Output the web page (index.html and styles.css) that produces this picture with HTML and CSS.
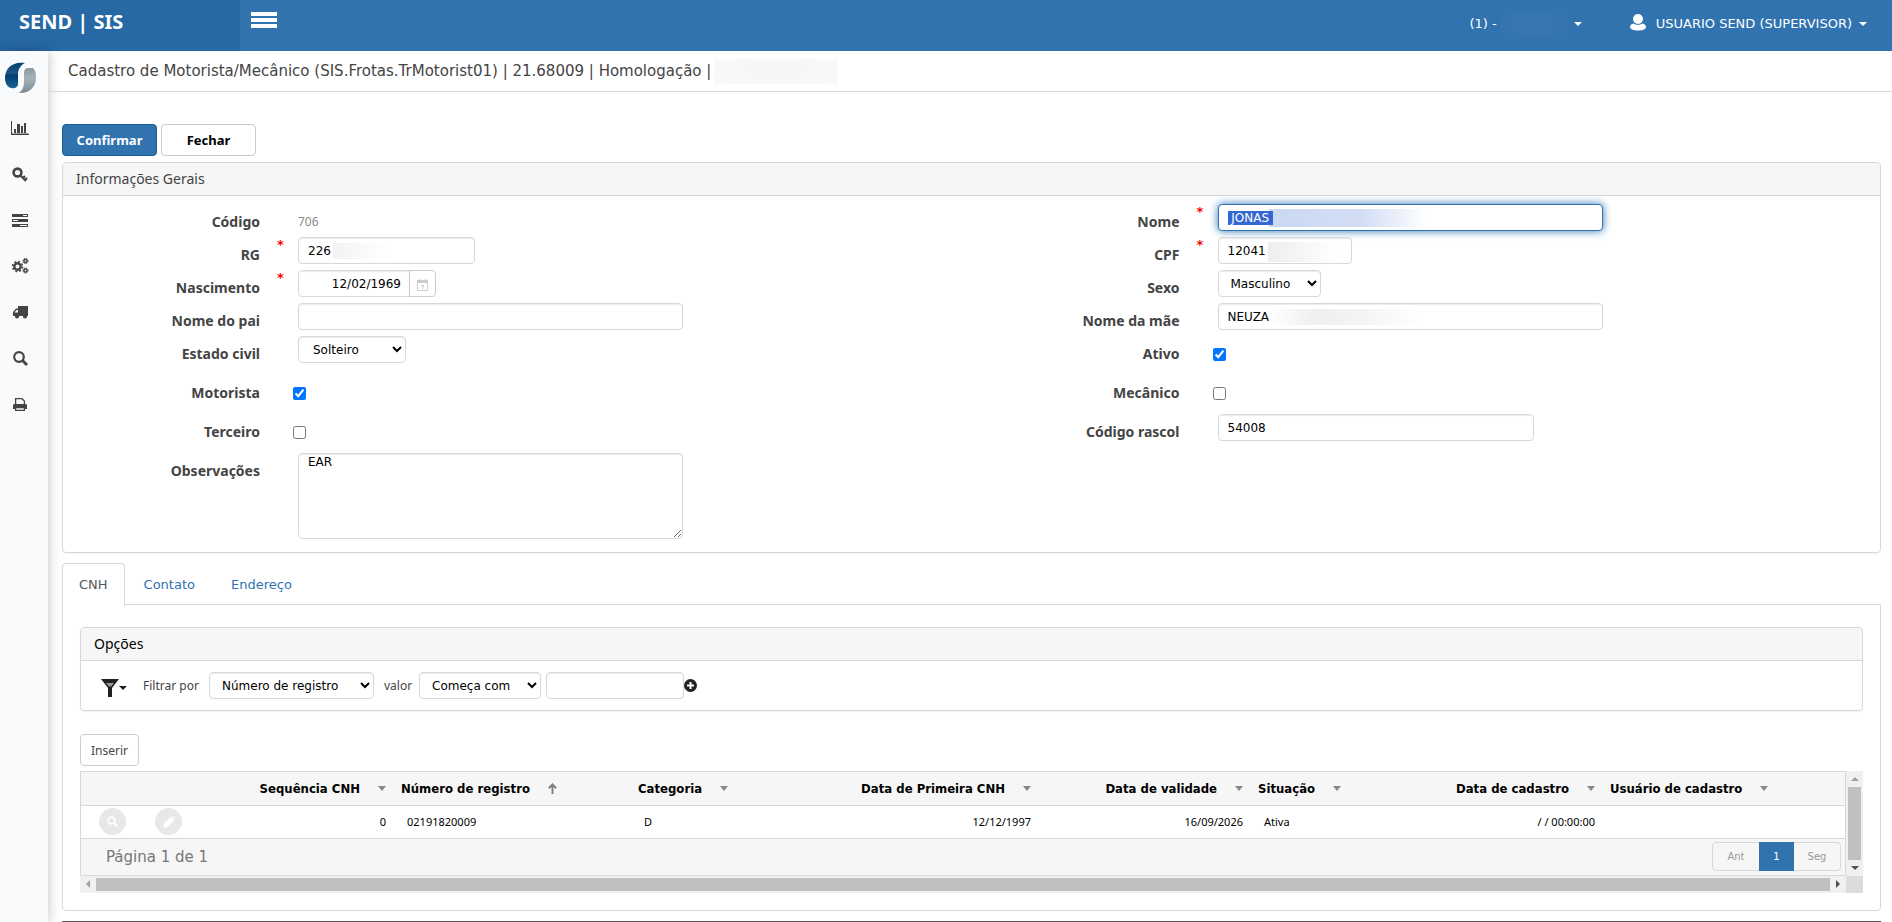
FILE: index.html
```
<!DOCTYPE html>
<html lang="pt-BR">
<head>
    <meta charset="UTF-8">
    <meta name="viewport" content="width=device-width, initial-scale=1.0">
    <title>Cadastro de Motorista/Mecânico</title>
    <link rel="stylesheet" href="styles.css">
</head>
<body>
    <header class="topbar">
        <a class="brand" href="#">SEND | SIS</a>
        <button class="menu-toggle" type="button" aria-label="Menu">
            <svg width="28" height="20" viewBox="0 0 28 20"><path fill="#fff" d="M1 1h26v4H1zM1 7h26v4H1zM1 13h26v4H1z"/></svg>
        </button>
        <nav class="topbar-nav">
            <a class="company" href="#">(1) - <span class="hidden-name"></span><span class="caret"></span></a>
            <a class="user" href="#">
                <svg width="16" height="18" viewBox="0 0 16 18"><circle cx="8" cy="6" r="5" fill="#fff"/><path fill="#fff" d="M0 14c0-2 1.500-3 3.500-3.500 2.500 1.700 6.500 1.700 9 0C14.500 11 16 12 16 14c0 2-3 3.500-8 3.500S0 16 0 14z"/></svg>
                <span>USUARIO SEND (SUPERVISOR)</span><span class="caret"></span>
            </a>
        </nav>
    </header>

    <div class="layout">
        <aside class="sidebar">
            <a class="logo" href="#" aria-label="Send">
                <svg width="32" height="32" viewBox="0 0 32 32">
                    <defs>
                        <linearGradient id="blue" x1="0" y1="0" x2="0" y2="1"><stop offset="0" stop-color="#00406f"/><stop offset=".4" stop-color="#1f5584"/><stop offset=".5" stop-color="#003f6f"/><stop offset="1" stop-color="#1a6296"/></linearGradient>
                        <linearGradient id="gray" x1="0" y1="0" x2="0" y2="1"><stop offset="0" stop-color="#8b98a0"/><stop offset=".4" stop-color="#a6b2ba"/><stop offset="1" stop-color="#7d8b94"/></linearGradient>
                    </defs>
                    <path fill="url(#blue)" d="M20 1C8-1 0 6 0 16c0 5 2 9 6 10 4 1 7-1 7-4V12c0-5 3-9 7-11z"/>
                    <path fill="url(#gray)" d="M22 6h6c3 3 3 7 3 10 0 9-7 15-15 15h-2c4-3 5-7 5-12v-8c0-3 1-4 3-5z"/>
                </svg>
            </a>
            <a class="side-link" href="#" aria-label="Indicadores"><svg width="18" height="14" viewBox="0 0 18 14"><path fill="#444" d="M0 0h1v12.500h17V14H0zM3 8h2v4H3zM6 3h3v9H6zM10 5h2v7h-2zM13 2h2v10h-2z"/></svg></a>
            <a class="side-link" href="#" aria-label="Acessos"><svg width="16" height="15" viewBox="0 0 16 15"><circle cx="5.500" cy="5.500" r="3.900" fill="none" stroke="#444" stroke-width="2.600"/><path fill="none" stroke="#444" stroke-width="2.200" d="M8 8l6 6M10.500 11.500l2.500-2.500M12.500 13.500l2.500-2.500"/></svg></a>
            <a class="side-link" href="#" aria-label="Cadastros"><svg width="16" height="13" viewBox="0 0 16 13"><path fill="#444" d="M0 0h16v3H0zM0 5h16v3H0zM0 10h16v3H0z"/><path fill="#fff" d="M11 1h4v1h-4zM1 6h5v1H1zM8 11h7v1H8z"/></svg></a>
            <a class="side-link" href="#" aria-label="Processos"><svg width="17" height="16" viewBox="0 0 17 16"><g fill="none" stroke="#444"><circle cx="5.500" cy="8.500" r="3.200" stroke-width="2.400"/><circle cx="5.500" cy="8.500" r="5" stroke-width="1.500" stroke-dasharray="2 1.930"/><circle cx="13.500" cy="3" r="1.600" stroke-width="1.500"/><circle cx="13.500" cy="3" r="2.600" stroke-dasharray="1.200 .84"/><circle cx="13.500" cy="12.500" r="1.600" stroke-width="1.500"/><circle cx="13.500" cy="12.500" r="2.600" stroke-dasharray="1.200 .84"/></g></svg></a>
            <a class="side-link" href="#" aria-label="Frotas"><svg width="15" height="13" viewBox="0 0 15 13"><path fill="#444" d="M5 0h10v10h-1a2 2 0 0 1-4 0H6a2 2 0 0 1-4 0H0V6l3-3.500h2z"/><path fill="#f9fafb" d="M1.500 6.500L3.500 4H5v2.500z"/><circle cx="4" cy="10.500" r="1.900" fill="#444"/><circle cx="12" cy="10.500" r="1.900" fill="#444"/></svg></a>
            <a class="side-link" href="#" aria-label="Consultas"><svg width="15" height="15" viewBox="0 0 15 15"><circle cx="6" cy="6" r="4.800" fill="none" stroke="#444" stroke-width="2.200"/><path stroke="#444" stroke-width="2.800" d="M9.500 9.500l4.500 4.500"/></svg></a>
            <a class="side-link" href="#" aria-label="Relatórios"><svg width="14" height="13" viewBox="0 0 14 13"><path fill="none" stroke="#444" stroke-width="1.300" d="M2.600 7V.700h6.400l2.400 2.300v4M2.600 9.500v2.800h8.800V9.500z"/><path fill="#444" d="M1 6h12l1 1v4h-2.500V9h-9v2H0V7z"/></svg></a>
        </aside>

        <main class="content">
            <h1 class="page-title"><span>Cadastro de Motorista/Mecânico (SIS.Frotas.TrMotorist01) | 21.68009 | Homologação |</span><span class="hidden-title"></span></h1>

            <form class="page-body">
                <div class="actions">
                    <button class="btn btn-primary" type="button">Confirmar</button>
                    <button class="btn" type="button">Fechar</button>
                </div>

                <section class="panel">
                    <h2 class="panel-heading">Informações Gerais</h2>
                    <div class="form-grid">
                        <div class="field">
                            <span class="label">Código</span><span class="mark"></span>
                            <output class="code">706</output>
                        </div>
                        <div class="field">
                            <label class="label" for="nome">Nome</label><span class="mark">*</span>
                            <input class="input w-full name" id="nome" type="text" value=" JONAS " autofocus>
                        </div>
                        <div class="field">
                            <label class="label" for="rg">RG</label><span class="mark">*</span>
                            <input class="input w-rg rg" id="rg" type="text" value="226">
                        </div>
                        <div class="field">
                            <label class="label" for="cpf">CPF</label><span class="mark">*</span>
                            <input class="input w-cpf cpf" id="cpf" type="text" value="12041">
                        </div>
                        <div class="field">
                            <label class="label" for="nascimento">Nascimento</label><span class="mark">*</span>
                            <div class="date-group">
                                <input class="input date" id="nascimento" type="text" value="12/02/1969">
                                <button class="date-btn" type="button" aria-label="Calendário"><svg width="11" height="12" viewBox="0 0 11 12"><path fill="none" stroke="#ccc" d="M.5 1.500h10v10H.5z"/><path fill="#ccc" d="M0 1h11v3H0zM2 0h1v2H2zM8 0h1v2H8zM4 6h3v1L6 10H5l1-3H4z"/></svg></button>
                            </div>
                        </div>
                        <div class="field">
                            <label class="label" for="sexo">Sexo</label><span class="mark"></span>
                            <select class="input select w-sexo" id="sexo"><option>Masculino</option><option>Feminino</option></select>
                        </div>
                        <div class="field">
                            <label class="label" for="pai">Nome do pai</label><span class="mark"></span>
                            <input class="input w-full" id="pai" type="text">
                        </div>
                        <div class="field">
                            <label class="label" for="mae">Nome da mãe</label><span class="mark"></span>
                            <input class="input w-full mother" id="mae" type="text" value="NEUZA">
                        </div>
                        <div class="field tall">
                            <label class="label" for="civil">Estado civil</label><span class="mark"></span>
                            <select class="input select w-civil" id="civil"><option>Solteiro</option><option>Casado</option></select>
                        </div>
                        <div class="field tall">
                            <label class="label" for="ativo">Ativo</label><span class="mark"></span>
                            <input class="check" id="ativo" type="checkbox" checked>
                        </div>
                        <div class="field tall">
                            <label class="label" for="motorista">Motorista</label><span class="mark"></span>
                            <input class="check" id="motorista" type="checkbox" checked>
                        </div>
                        <div class="field tall">
                            <label class="label" for="mecanico">Mecânico</label><span class="mark"></span>
                            <input class="check" id="mecanico" type="checkbox">
                        </div>
                        <div class="field tall">
                            <label class="label" for="terceiro">Terceiro</label><span class="mark"></span>
                            <input class="check" id="terceiro" type="checkbox">
                        </div>
                        <div class="field tall">
                            <label class="label" for="rascol">Código rascol</label><span class="mark"></span>
                            <input class="input w-rascol" id="rascol" type="text" value="54008">
                        </div>
                        <div class="field">
                            <label class="label" for="obs">Observações</label><span class="mark"></span>
                            <textarea class="input w-full obs" id="obs">EAR</textarea>
                        </div>
                    </div>
                </section>

                <nav class="tabs">
                    <a class="tab active" href="#">CNH</a>
                    <a class="tab" href="#">Contato</a>
                    <a class="tab" href="#">Endereço</a>
                </nav>
                <section class="tab-content">
                    <div class="panel">
                        <h2 class="panel-heading dark">Opções</h2>
                        <div class="filter">
                            <button class="filter-btn" type="button" aria-label="Filtro">
                                <svg width="18" height="18" viewBox="0 0 18 18"><path fill="#222" d="M0 0h18l-7 9v9H7V9z"/><path fill="#999" d="M5 4h8l-3 3.500H8z"/></svg>
                                <span class="caret"></span>
                            </button>
                            <label class="filter-label" for="campo">Filtrar por</label>
                            <select class="input select w-campo" id="campo"><option>Número de registro</option><option>Categoria</option></select>
                            <label class="filter-label value" for="operador">valor</label>
                            <select class="input select w-operador" id="operador"><option>Começa com</option><option>Contém</option></select>
                            <input class="input w-valor" type="text" aria-label="Valor do filtro">
                            <button class="add-btn" type="button" aria-label="Adicionar filtro"><svg width="13" height="13" viewBox="0 0 13 13"><circle cx="6.500" cy="6.500" r="6.500" fill="#222"/><path fill="#fff" d="M5.500 3h2v2.500H10v2H7.500V10h-2V7.500H3v-2h2.500z"/></svg></button>
                        </div>
                    </div>

                    <button class="btn insert" type="button">Inserir</button>

                    <div class="scroll-box">
                        <div class="grid-wrap">
                            <table class="grid">
                                <colgroup>
                                    <col class="c-view"><col class="c-edit"><col class="c-seq"><col class="c-num"><col class="c-cat"><col class="c-first"><col class="c-valid"><col class="c-sit"><col class="c-date"><col>
                                </colgroup>
                                <thead>
                                    <tr>
                                        <th></th>
                                        <th></th>
                                        <th class="right">Sequência CNH<span class="sort"></span></th>
                                        <th>Número de registro<svg class="sort-up" width="9" height="11" viewBox="0 0 9 11"><path fill="none" stroke="#808080" stroke-width="2" d="M4.500 11V1.500M.8 5.200l3.700-3.700 3.700 3.700"/></svg></th>
                                        <th>Categoria<span class="sort"></span></th>
                                        <th class="right">Data de Primeira CNH<span class="sort"></span></th>
                                        <th class="right">Data de validade<span class="sort"></span></th>
                                        <th>Situação<span class="sort"></span></th>
                                        <th class="right">Data de cadastro<span class="sort"></span></th>
                                        <th>Usuário de cadastro<span class="sort"></span></th>
                                    </tr>
                                </thead>
                                <tbody>
                                    <tr>
                                        <td class="tool"><button class="round" type="button" aria-label="Visualizar"><svg width="11" height="11" viewBox="0 0 11 11"><circle cx="4.500" cy="4.500" r="3.400" fill="none" stroke="#fff" stroke-width="1.800"/><path stroke="#fff" stroke-width="2.200" d="M7 7l3.300 3.300"/></svg></button></td>
                                        <td class="tool"><button class="round" type="button" aria-label="Editar"><svg width="12" height="12" viewBox="0 0 12 12"><path fill="#fff" d="M0 12l1-4.500L7.500 1l3.500 3.500L4.500 11zM8.200.5q1-1 2 0l1.300 1.300q1 1 0 2z"/></svg></button></td>
                                        <td class="right">0</td>
                                        <td>02191820009</td>
                                        <td>D</td>
                                        <td class="right">12/12/1997</td>
                                        <td class="right">16/09/2026</td>
                                        <td>Ativa</td>
                                        <td class="right">/ / 00:00:00</td>
                                        <td></td>
                                    </tr>
                                </tbody>
                            </table>
                            <div class="grid-footer">
                                <span class="page-info">Página 1 de 1</span>
                                <div class="pager">
                                    <button type="button">Ant</button>
                                    <button class="current" type="button">1</button>
                                    <button type="button">Seg</button>
                                </div>
                            </div>
                        </div>
                        <div class="bar vertical"><span class="arrow up"></span><span class="thumb"></span><span class="arrow down"></span></div>
                        <div class="bar horizontal"><span class="arrow left"></span><span class="thumb"></span><span class="arrow next"></span></div>
                        <div class="corner"></div>
                    </div>
                </section>
                <hr class="end-line">
            </form>
        </main>
    </div>

    <script>
        // start with the name ready to be replaced
        const nome = document.getElementById('nome');
        nome.focus();
        nome.select();
    </script>
</body>
</html>
```
FILE: styles.css
```
* {
    box-sizing: border-box;
}

body {
    margin: 0;
    min-height: 100vh;
    overflow: hidden;
    font-family: "DejaVu Sans", Verdana, sans-serif;
    font-size: 12px;
    color: #444;
    background-color: #fff;
}

a {
    text-decoration: none;
}

button {
    font-family: inherit;
    cursor: pointer;
}

/* top bar */
.topbar {
    display: flex;
    height: 51px;
    background-color: #3173af;
    color: #fff;
}

.topbar a {
    color: #fff;
}

.brand {
    width: 240px;
    padding: 0 19px;
    line-height: 43px;
    font-family: "Noto Sans", Tahoma, sans-serif;
    font-size: 20px;
    font-weight: bold;
    background-color: #2669a5;
}

.menu-toggle {
    display: flex;
    padding: 11px 10px;
    border: 0;
    background: none;
}

.topbar-nav {
    display: flex;
    gap: 48px;
    margin-left: auto;
    padding-right: 25px;
    line-height: 48px;
    font-size: 13px;
}

.company,
.user {
    display: flex;
    align-items: center;
    height: 48px;
}

.user svg {
    margin: 0 10px 4px 0;
}

.hidden-name {
    width: 69px;
    height: 29px;
    margin: 0 5px 0 3px;
    background: radial-gradient(#3876b1, #3274b0);
}

.caret {
    border: 4px solid transparent;
    border-top-color: currentColor;
    border-bottom: 0;
}

.user .caret {
    margin-left: 7px;
}

/* sidebar */
.layout {
    display: flex;
}

.sidebar {
    display: flex;
    flex-direction: column;
    flex: none;
    width: 48px;
    min-height: calc(100vh - 51px);
    background-color: #f9fafc;
    box-shadow: 0 0 12px rgba(0, 0, 0, 0.25);
}

.logo {
    display: flex;
    height: 54px;
    padding: 11px 5px;
}

.side-link {
    display: flex;
    align-items: center;
    justify-content: center;
    width: 40px;
    height: 46px;
}

.content {
    flex: 1;
    min-width: 0;
}

.page-title {
    display: flex;
    align-items: center;
    height: 41px;
    margin: 0;
    padding: 0 20px;
    border-bottom: 1px solid #d8d8d8;
    font-size: 15px;
    font-weight: normal;
}

.hidden-title {
    width: 124px;
    height: 25px;
    margin-left: 3px;
    background: radial-gradient(#f5f5f5, #fafafa);
}

.page-body {
    padding: 32px 11px 0 14px;
}

/* buttons */
.actions {
    display: flex;
    gap: 4px;
    margin-bottom: 6px;
}

.btn {
    min-width: 95px;
    height: 32px;
    border: 1px solid #ccc;
    border-radius: 4px;
    background-color: #fff;
    color: #000;
    font-family: "Noto Sans", Tahoma, sans-serif;
    font-size: 13px;
    font-weight: bold;
}

.btn-primary {
    border-color: #1d5a96;
    background-color: #3173af;
    color: #fff;
}

.btn.insert {
    display: block;
    min-width: 59px;
    margin: 23px 0 5px;
    padding: 0;
    color: #444;
    font-size: 12px;
    font-weight: normal;
}

/* panels */
.panel {
    border: 1px solid #d8d8d8;
    border-radius: 4px;
    box-shadow: 0 1px 1px rgba(0, 0, 0, 0.05);
}

.panel-heading {
    margin: 0;
    padding: 0 13px;
    border-bottom: 1px solid #d8d8d8;
    border-radius: 4px 4px 0 0;
    background-color: #f6f6f6;
    font-family: "Noto Sans", Tahoma, sans-serif;
    font-size: 14px;
    font-weight: normal;
    line-height: 32px;
}

.panel-heading.dark {
    color: #000;
}

.form-grid {
    display: grid;
    grid-template-columns: 1fr 1fr;
    column-gap: 22px;
    padding: 8px 0 13px;
}

.field {
    display: grid;
    grid-template-columns: 197px 38px 1fr;
    align-items: start;
    min-height: 33px;
}

.field.tall {
    min-height: 39px;
}

.label {
    padding-top: 8px;
    line-height: 20px;
    text-align: right;
    font-family: "Noto Sans", "Trebuchet MS", sans-serif;
    font-size: 14px;
    font-weight: bold;
}

.mark {
    padding-left: 17px;
    line-height: 16px;
    font-size: 13px;
    font-weight: bold;
    color: #f00;
}

.code {
    height: 33px;
    line-height: 36px;
    font-family: "Noto Sans", Tahoma, sans-serif;
    color: #888;
}

.input {
    height: 27px;
    padding: 0 9px;
    border: 1px solid #d8d8d8;
    border-radius: 4px;
    background-color: #fff;
    box-shadow: inset 0 1px 1px rgba(0, 0, 0, 0.08);
    color: #000;
    font-family: inherit;
    font-size: 12px;
}

.input:focus {
    outline: none;
    border-color: #2f74b2;
    box-shadow: 0 0 8px #2f74b2;
}

.input::selection {
    background-color: #3367d1;
    color: #fff;
}

.select {
    padding: 0 4px 0 8px;
}

.w-full { width: 385px; }
.w-rg { width: 177px; }
.w-cpf { width: 134px; }
.w-sexo { width: 103px; }
.w-civil { width: 108px; padding-left: 10px; }
.w-rascol { width: 316px; }
.w-campo { width: 165px; }
.w-operador { width: 122px; }
.w-valor { width: 138px; }

/* masked personal data */
.name {
    background: linear-gradient(90deg, #cbd8f3, #d3def5 60%, #fff) 50px 4px / 158px 18px no-repeat #fff;
}

.rg {
    background: linear-gradient(90deg, #f3f3f3, #fff) 34px 5px / 56px 16px no-repeat #fff;
}

.cpf {
    background: linear-gradient(90deg, #ededed, #fff) 49px 4px / 70px 20px no-repeat #fff;
}

.mother {
    background: linear-gradient(90deg, #fff, #efefef 30%, #f4f4f4 60%, #fff) 51px 5px / 153px 16px no-repeat #fff;
}

.date-group {
    display: flex;
}

.date {
    width: 112px;
    padding-right: 8px;
    border-radius: 4px 0 0 4px;
    text-align: right;
}

.date-btn {
    display: flex;
    align-items: center;
    justify-content: center;
    width: 27px;
    height: 27px;
    margin-left: -1px;
    padding: 3px 0 0;
    border: 1px solid #ccc;
    border-radius: 0 4px 4px 0;
    background-color: #fff;
}

.check {
    width: 13px;
    height: 13px;
    margin: 12px 0 0 -5px;
}

.obs {
    display: block;
    height: 86px;
    padding: 1px 9px;
}

/* tabs */
.tabs {
    display: flex;
    margin-top: 10px;
}

.tab {
    margin-right: 2px;
    padding: 0 16px;
    border: 1px solid transparent;
    line-height: 41px;
    font-size: 13px;
    color: #2f74b2;
}

/* covers the top line of the content box */
.tab.active {
    position: relative;
    border-color: #d8d8d8;
    border-bottom: 0;
    border-radius: 4px 4px 0 0;
    background-color: #fff;
    color: #555;
}

.tab-content {
    margin-top: -2px;
    padding: 22px 17px 17px;
    border: 1px solid #d8d8d8;
    border-radius: 0 0 4px 4px;
}

.filter {
    display: flex;
    align-items: center;
    height: 49px;
    padding-left: 20px;
}

.filter-btn,
.add-btn {
    display: flex;
    align-items: center;
    padding: 0;
    border: 0;
    background: none;
    color: #222;
}

.filter-btn {
    padding-top: 4px;
}

.filter-label {
    width: 66px;
    margin-left: 16px;
    font-family: "Noto Sans", Tahoma, sans-serif;
}

.filter-label.value {
    width: 35px;
    margin-left: 10px;
}

.w-operador {
    margin-right: 5px;
}

/* data grid */
.scroll-box {
    display: grid;
    grid-template-columns: 1fr 17px;
    grid-template-rows: auto 17px;
}

.grid-wrap {
    min-width: 0;
    border: 1px solid #d8d8d8;
}

.grid {
    width: 100%;
    border-collapse: collapse;
    table-layout: fixed;
    color: #000;
}

.grid tr {
    height: 33px;
    border-bottom: 1px solid #d8d8d8;
}

.grid th {
    padding: 0 7px 0 8px;
    background-color: #f6f6f6;
    text-align: left;
    font-family: "DejaVu Sans Condensed", "DejaVu Sans", Tahoma, sans-serif;
    font-size: 13px;
    white-space: nowrap;
}

.grid td {
    padding: 0 7px 0 14px;
    font-family: "Noto Sans", Tahoma, sans-serif;
    font-size: 11px;
}

.grid .right {
    text-align: right;
}

.grid .tool {
    padding: 0 0 0 18px;
}

.c-view { width: 56px; }
.c-edit { width: 58px; }
.c-seq { width: 198px; }
.c-num { width: 237px; }
.c-cat { width: 165px; }
.c-first { width: 243px; }
.c-valid { width: 212px; }
.c-sit { width: 145px; }
.c-date { width: 207px; }

.sort {
    display: inline-block;
    margin-left: 18px;
    border: 4px solid transparent;
    border-top: 5px solid #888;
    border-bottom: 0;
    vertical-align: 2px;
}

.sort-up {
    margin-left: 18px;
    vertical-align: -1px;
}

.round {
    display: flex;
    align-items: center;
    justify-content: center;
    width: 27px;
    height: 27px;
    padding: 0;
    border: 0;
    border-radius: 50%;
    background-color: #e8e8e8;
}

.grid-footer {
    display: flex;
    align-items: center;
    justify-content: space-between;
    height: 36px;
    padding: 0 4px 0 25px;
    background-color: #f6f6f6;
}

.page-info {
    font-size: 15px;
    color: #777;
}

.pager {
    display: flex;
    border: 1px solid #d8d8d8;
    border-radius: 4px;
}

.pager button {
    width: 46px;
    height: 27px;
    padding: 0;
    border: 0;
    background: none;
    color: #999;
    font-size: 10px;
}

.pager .current {
    width: 35px;
    height: 29px;
    margin: -1px 0;
    background-color: #3173af;
    color: #fff;
}

.bar {
    display: flex;
    align-items: center;
    background-color: #f0f0f0;
}

.bar .thumb {
    flex: 1;
    background-color: #c0c0c0;
}

.vertical {
    flex-direction: column;
}

.vertical .thumb {
    width: 13px;
}

.horizontal .thumb {
    height: 13px;
}

.arrow {
    margin: 6px;
    border: 4px solid transparent;
}

.up { border-top: 0; border-bottom-color: #a0a0a0; }
.down { border-bottom: 0; border-top-color: #505050; }
.left { border-left: 0; border-right-color: #a0a0a0; }
.next { border-right: 0; border-left-color: #505050; }

.corner {
    background-color: #dcdcdc;
}

.end-line {
    margin: 10px 0 0;
    border: 0;
    border-top: 1px solid #555;
}
```
